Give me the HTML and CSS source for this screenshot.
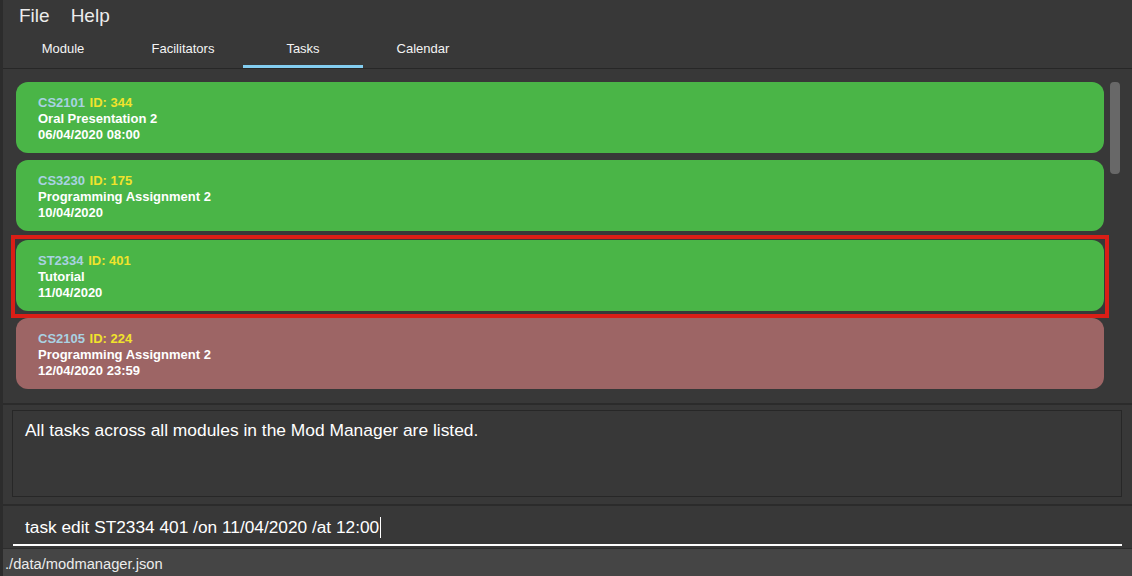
FILE: index.html
```html
<!DOCTYPE html>
<html>
<head>
<meta charset="utf-8">
<link rel="stylesheet" href="styles.css">
</head>
<body>
<div class="app">
  <div class="menubar">
    <span class="menu">File</span>
    <span class="menu">Help</span>
  </div>
  <div class="tabs">
    <div class="tab">Module</div>
    <div class="tab">Facilitators</div>
    <div class="tab active">Tasks</div>
    <div class="tab">Calendar</div>
  </div>
  <div class="list-panel">
    <div class="list">
      <div class="card green">
        <div><span class="code">CS2101</span> <span class="id">ID: 344</span></div>
        <div>Oral Presentation 2</div>
        <div>06/04/2020 08:00</div>
      </div>
      <div class="card green">
        <div><span class="code">CS3230</span> <span class="id">ID: 175</span></div>
        <div>Programming Assignment 2</div>
        <div>10/04/2020</div>
      </div>
      <div class="selection">
        <div class="card green">
          <div><span class="code">ST2334</span> <span class="id">ID: 401</span></div>
          <div>Tutorial</div>
          <div>11/04/2020</div>
        </div>
      </div>
      <div class="card red">
        <div><span class="code">CS2105</span> <span class="id">ID: 224</span></div>
        <div>Programming Assignment 2</div>
        <div>12/04/2020 23:59</div>
      </div>
    </div>
    <div class="scrollbar"><div class="thumb"></div></div>
  </div>
  <div class="result-panel">
    <div class="result-box">All tasks across all modules in the Mod Manager are listed.</div>
  </div>
  <div class="command-panel">
    <div class="command">task edit ST2334 401 /on 11/04/2020 /at 12:00<span class="caret"></span></div>
  </div>
  <div class="status">./data/modmanager.json</div>
</div>
</body>
</html>
```
FILE: styles.css
```css
html, body {
  margin: 0;
  padding: 0;
  background: #383838;
}

.app {
  width: 1129px;
  height: 576px;
  border-left: 3px solid #2c2c2c;
  background: #383838;
  font-family: "Liberation Sans", Arial, sans-serif;
  color: #ffffff;
  display: flex;
  flex-direction: column;
  overflow: hidden;
}

.menubar {
  height: 32px;
  flex-shrink: 0;
  box-sizing: border-box;
  padding: 5px 0 0 16px;
  display: flex;
  gap: 21px;
  font-size: 19px;
  line-height: 22px;
  color: #ececec;
}

.tabs {
  display: flex;
  height: 37px;
  box-sizing: border-box;
  padding-bottom: 1px;
  border-bottom: 1px solid #272727;
  flex-shrink: 0;
}

.tab {
  width: 120px;
  height: 36px;
  box-sizing: border-box;
  padding-top: 9px;
  text-align: center;
  font-size: 13px;
  line-height: 15px;
  border-bottom: 3px solid transparent;
  color: #f4f4f4;
}

.tab.active {
  border-bottom-color: #83cdf0;
}

.list-panel {
  height: 334px;
  flex-shrink: 0;
  display: flex;
  box-sizing: border-box;
  padding: 13px 0 0 13px;
  overflow: hidden;
}

.list {
  width: 1088px;
  display: flex;
  flex-direction: column;
  gap: 7px;
}

.card {
  height: 71px;
  flex-shrink: 0;
  box-sizing: border-box;
  padding: 13px 22px 10px;
  border-radius: 12px;
  font-size: 13px;
  font-weight: bold;
  line-height: 16px;
  color: #ffffff;
}

.card.green {
  background: #4ab547;
}

.card.red {
  background: #9d6565;
}

.selection {
  flex-shrink: 0;
  margin: -3px -5px -7px -5px;
  padding: 1px 1px 3px 1px;
  border: 4px solid #da1e16;
}

.code {
  color: #a9d2e2;
  margin-right: 1px;
}

.id {
  color: #f1e32c;
}

.scrollbar {
  width: 10px;
  margin-left: 6px;
}

.thumb {
  height: 92px;
  border-radius: 4px;
  background: #686868;
}

.result-panel {
  height: 101px;
  flex-shrink: 0;
  box-sizing: border-box;
  border-top: 2px solid #2b2b2b;
  padding: 5px 10px 0 9px;
}

.result-box {
  height: 87px;
  box-sizing: border-box;
  border: 1px solid #272727;
  padding: 10px 12px;
  font-size: 17.4px;
  line-height: 19px;
  color: #ffffff;
}

.command-panel {
  height: 44px;
  flex-shrink: 0;
  box-sizing: border-box;
  border-top: 2px solid #2b2b2b;
  padding: 0 10px 0 10px;
}

.command {
  box-sizing: border-box;
  height: 40px;
  padding: 12px 12px 0;
  border-bottom: 2px solid #ffffff;
  font-size: 17.3px;
  line-height: 19px;
  color: #ffffff;
  display: flex;
  align-items: flex-start;
}

.caret {
  display: inline-block;
  width: 1px;
  height: 21px;
  background: #ffffff;
  margin-left: 1px;
  margin-top: -1px;
}

.status {
  flex: 1;
  background: #454545;
  border-top: 1px solid #2d2d2d;
  box-sizing: border-box;
  padding: 7px 0 0 2px;
  font-size: 14.7px;
  line-height: 17px;
  color: #ececec;
}
```
